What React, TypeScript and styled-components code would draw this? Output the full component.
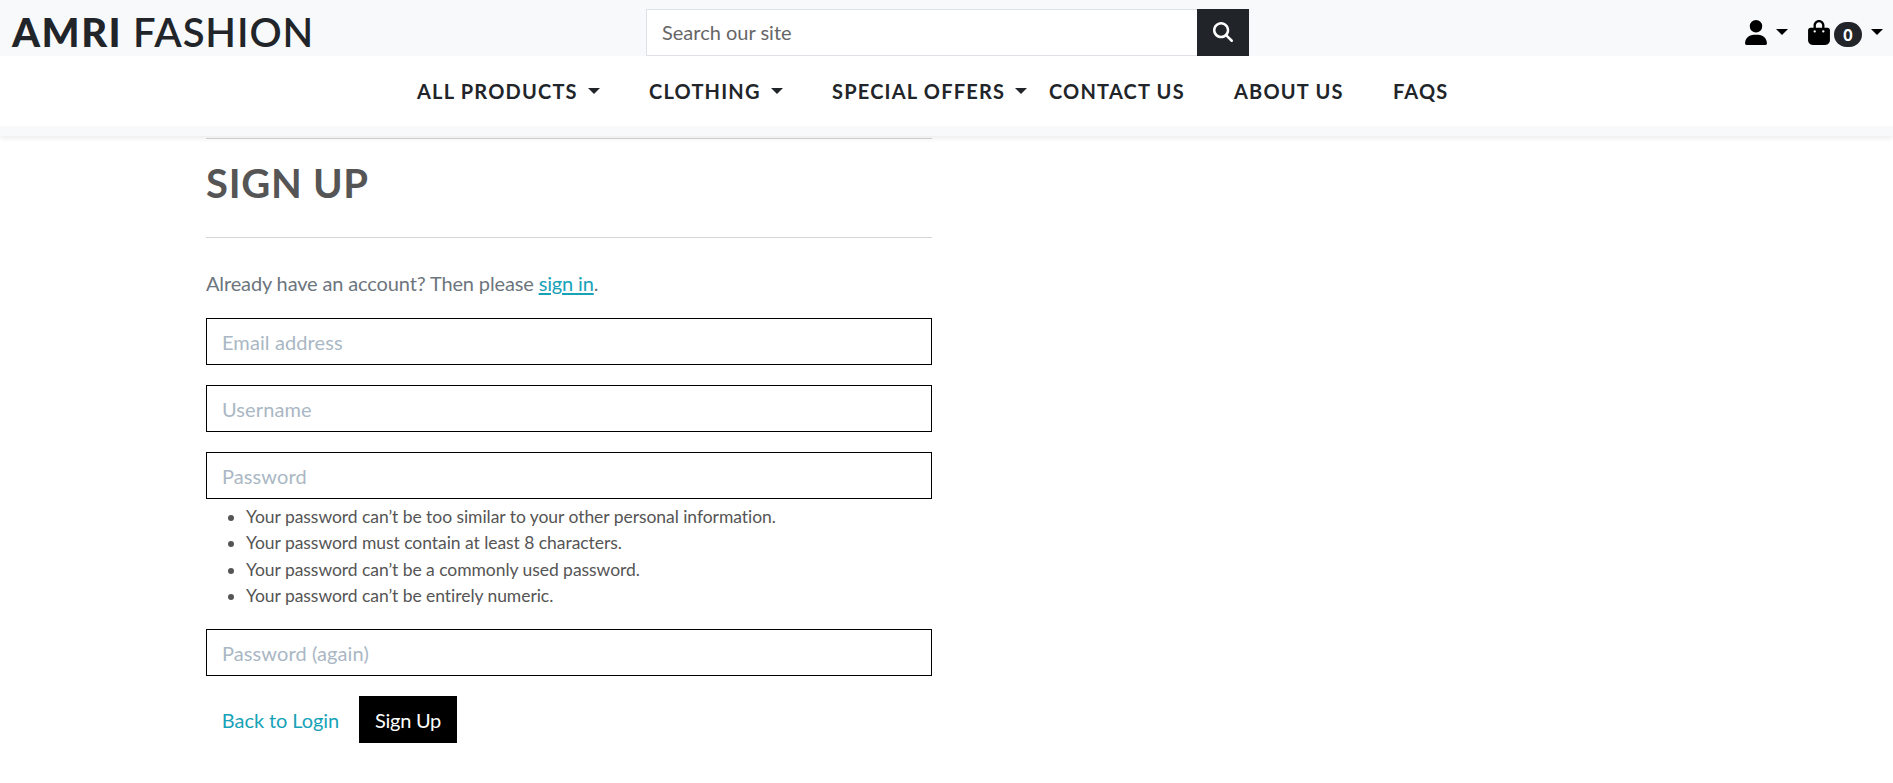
import React from "react";
import styled, { createGlobalStyle } from "styled-components";
import { FaUser, FaBagShopping, FaMagnifyingGlass } from "react-icons/fa6";

const GlobalStyle = createGlobalStyle`
  *, *::before, *::after { box-sizing: border-box; }
  body {
    margin: 0;
    background: #fff;
    color: #555;
    font-family: Lato, "Liberation Sans", sans-serif;
    font-size: 20px;
    font-variant-ligatures: none;
    line-height: 1.5;
  }
`;

const Header = styled.header`
  position: relative;
  padding-bottom: 10px;
  background: #f8f9fa;
  box-shadow: 0 2.5px 5px rgba(0, 0, 0, 0.075);
`;

const TopBar = styled.div`
  display: grid;
  grid-template-columns: 646px 603px 1fr;
  height: 56px;
`;

const Logo = styled.a`
  padding: 8px 0 0 12px;
  color: #212529;
  font-size: 40px;
  font-weight: 600;
  line-height: 48px;
  letter-spacing: 0.9px;
  text-decoration: none;
  white-space: nowrap;
  strong { font-weight: 900; letter-spacing: 1.5px; }
`;

const SearchForm = styled.form`
  display: flex;
  height: 47px;
  margin: 9px 0 0;
`;

const SearchInput = styled.input`
  flex: 1;
  min-width: 0;
  padding: 0 15px 2px;
  border: 1px solid #dee2e6;
  border-right: 0;
  border-radius: 0;
  background: #fff;
  font: inherit;
  &::placeholder { color: #666; opacity: 1; }
`;

const SearchButton = styled.button`
  display: flex;
  align-items: center;
  justify-content: center;
  width: 52px;
  padding: 0 0 1px;
  border: 0;
  background: #212529;
  color: #fff;
  font-size: 20px;
`;

const Tools = styled.div`
  display: flex;
  justify-content: flex-end;
  align-items: flex-start;
  padding: 20px 10px 0 0;
`;

const Tool = styled.a`
  display: flex;
  color: #000;
  margin-left: 20px;
  svg { display: block; width: 22px; height: 25px; }
`;

const Caret = styled.span<{ $gap: number; $top?: number }>`
  flex: none;
  width: 12px;
  height: 6px;
  margin-left: ${(p) => p.$gap}px;
  margin-top: ${(p) => p.$top ?? 0}px;
  border-top: 6px solid currentColor;
  border-left: 6px solid transparent;
  border-right: 6px solid transparent;
`;

const Badge = styled.span`
  width: 28px;
  height: 25px;
  margin: 2px 0 0 4px;
  border-radius: 13px;
  background: #212529;
  color: #fff;
  font-size: 16px;
  font-weight: 900;
  line-height: 25px;
  text-align: center;
`;

const Nav = styled.nav`
  display: flex;
  height: 70px;
  padding: 20px 0 0 417px;
  background: #fff;
`;

const NavLink = styled.a<{ $width: number }>`
  display: flex;
  flex: none;
  width: ${(p) => p.$width}px;
  color: #212529;
  font-size: 20px;
  font-weight: 700;
  line-height: 30px;
  letter-spacing: 1.2px;
  text-decoration: none;
  white-space: nowrap;
`;

const Content = styled.main`
  width: 726px;
  margin: 2px 0 0 206px;
`;

const Rule = styled.hr`
  height: 1px;
  margin: 0;
  border: 0;
  background: #d4d4d4;
`;

const Title = styled.h1`
  margin: 0;
  padding: 20px 0 30px;
  font-size: 40px;
  font-weight: 700;
  line-height: 48px;
  letter-spacing: 0.7px;
`;

const Intro = styled.p`
  margin: 30px 0 20px;
  color: #6c757d;
  letter-spacing: -0.14px;
  a { color: #17a2b8; text-decoration-thickness: 2px; text-underline-offset: 2px; }
`;

const SignUpForm = styled.form`
  display: flex;
  flex-direction: column;
  gap: 20px;
`;

const Field = styled.input`
  display: block;
  width: 100%;
  height: 47px;
  padding: 0 15px;
  border: 1px solid #000;
  border-radius: 0;
  background: #fff;
  font: inherit;
  letter-spacing: 0.1px;
  &::placeholder { color: #aab7c4; opacity: 1; }
`;

const Hints = styled.ul`
  margin: 5px 0 0;
  padding-left: 40px;
  color: #555;
  font-size: 17.5px;
  letter-spacing: -0.05px;
`;

const Actions = styled.div`
  display: flex;
  gap: 4px;
`;

const Button = styled.button<{ $solid?: boolean }>`
  width: ${(p) => (p.$solid ? 98 : 149)}px;
  height: 47px;
  padding: 0;
  border: 0;
  background: ${(p) => (p.$solid ? "#000" : "transparent")};
  color: ${(p) => (p.$solid ? "#fff" : "#17a2b8")};
  font: inherit;
  letter-spacing: ${(p) => (p.$solid ? -0.25 : -0.08)}px;
`;

const links = [
  { label: "ALL PRODUCTS", width: 232, menu: true },
  { label: "CLOTHING", width: 183, menu: true },
  { label: "SPECIAL OFFERS", width: 217, menu: true },
  { label: "CONTACT US", width: 185 },
  { label: "ABOUT US", width: 159 },
  { label: "FAQS", width: 60 },
];

const hints = [
  "Your password can’t be too similar to your other personal information.",
  "Your password must contain at least 8 characters.",
  "Your password can’t be a commonly used password.",
  "Your password can’t be entirely numeric.",
];

export default function App() {
  return (
    <>
      <GlobalStyle />
      <Header>
        <TopBar>
          <Logo><strong>AMRI</strong> FASHION</Logo>
          <SearchForm>
            <SearchInput placeholder="Search our site" />
            <SearchButton type="button" aria-label="Search"><FaMagnifyingGlass /></SearchButton>
          </SearchForm>
          <Tools>
            <Tool><FaUser /><Caret $gap={9} $top={9} /></Tool>
            <Tool><FaBagShopping /><Badge>0</Badge><Caret $gap={9} $top={9} /></Tool>
          </Tools>
        </TopBar>
        <Nav>
          {links.map((l) => (
            <NavLink key={l.label} $width={l.width}>
              {l.label}
              {l.menu && <Caret $gap={10} $top={12} />}
            </NavLink>
          ))}
        </Nav>
      </Header>
      <Content>
        <Rule />
        <Title>SIGN UP</Title>
        <Rule />
        <Intro>Already have an account? Then please <a href="#signin">sign in</a>.</Intro>
        <SignUpForm>
          <Field placeholder="Email address" />
          <Field placeholder="Username" />
          <div>
            <Field type="password" placeholder="Password" />
            <Hints>{hints.map((h) => <li key={h}>{h}</li>)}</Hints>
          </div>
          <Field type="password" placeholder="Password (again)" />
          <Actions>
            <Button type="button">Back to Login</Button>
            <Button type="button" $solid>Sign Up</Button>
          </Actions>
        </SignUpForm>
      </Content>
    </>
  );
}
